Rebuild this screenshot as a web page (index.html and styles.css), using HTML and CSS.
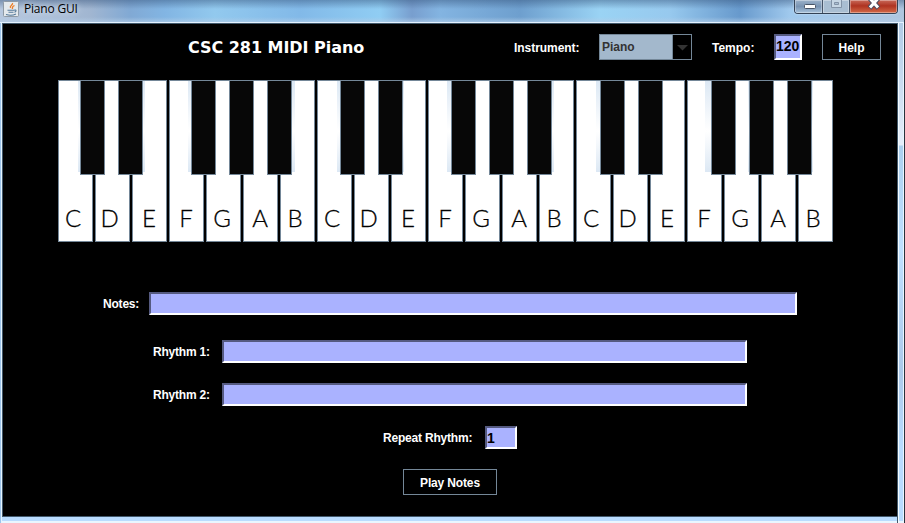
FILE: index.html
```html
<!DOCTYPE html>
<html lang="en">
<head>
<meta charset="utf-8">
<title>Piano GUI</title>
<link rel="stylesheet" href="styles.css">
</head>
<body>
<div class="window">
  <header class="titlebar">
    <svg class="java" viewBox="0 0 16 16" width="16" height="16"><rect x=".5" y=".5" width="15" height="15" rx="1" fill="#e4e9ed" stroke="#8f9aa5"/><path d="M9.500 2c1 2-3.500 2.500-2 5M11.500 4.500C9 5.500 9 6.500 9.500 8" fill="none" stroke="#ee7d25" stroke-width="1.300"/><path d="M4.500 9.300h7M5.500 11.200h5M3 13.500c3 1 7 1 10-.5M11.500 9c2-.4 2 1.500 0 2.200" fill="none" stroke="#54799a" stroke-width="1.100"/></svg>
    <span class="caption">Piano GUI</span>
    <div class="controls">
      <div class="control"><svg width="28" height="13"><rect x="9.500" y="4.500" width="11" height="4" rx="1" fill="#fff" stroke="#485568"/></svg></div>
      <div class="control muted"><svg width="26" height="13"><path fill-rule="evenodd" d="M8.500-1.500h10v9h-10zM11.500 2.500h4v2h-4z" fill="#c6d6e4" stroke="#8293a7"/></svg></div>
      <div class="control close"><svg width="47" height="13"><path d="M19.500-2l9 10M28.500-2l-9 10" fill="none" stroke="#4b4d60" stroke-width="5"/><path d="M20-1.500l8 9M28-1.500l-8 9" fill="none" stroke="#fff" stroke-width="3"/></svg></div>
    </div>
  </header>
  <main class="client">
    <div class="toolbar">
      <h1 class="title">CSC 281 MIDI Piano</h1>
      <span class="label instrument-label">Instrument:</span>
      <div class="combo"><span class="combo-value">Piano</span><span class="combo-arrow"><svg width="11" height="6"><path d="M0 0h11L5.500 5.500z" fill="#333"/></svg></span></div>
      <span class="label tempo-label">Tempo:</span>
      <div class="field tempo">120</div>
      <div class="button help">Help</div>
    </div>
    <div class="piano">
      <div class="whites">
        <div class="key c">C</div><div class="key d">D</div><div class="key">E</div><div class="key">F</div><div class="key g">G</div><div class="key">A</div><div class="key b">B</div>
        <div class="key c">C</div><div class="key d">D</div><div class="key">E</div><div class="key">F</div><div class="key g">G</div><div class="key">A</div><div class="key b">B</div>
        <div class="key c">C</div><div class="key d">D</div><div class="key">E</div><div class="key">F</div><div class="key g">G</div><div class="key">A</div><div class="key b">B</div>
      </div>
      <div class="blacks">
        <div class="group"><i class="black left2"></i><i class="black right2"></i></div>
        <div class="group"><i class="black left3"></i><i class="black"></i><i class="black right3"></i></div>
        <div class="group"><i class="black left3"></i><i class="black right1"></i></div>
        <div class="group"><i class="black left4"></i><i class="black"></i><i class="black right2"></i></div>
        <div class="group"><i class="black left4"></i><i class="black"></i></div>
        <div class="group"><i class="black left6"></i><i class="black left1"></i><i class="black right1"></i></div>
      </div>
    </div>
    <div class="row notes"><span class="label">Notes:</span><div class="field"></div></div>
    <div class="row rhythm first"><span class="label">Rhythm 1:</span><div class="field"></div></div>
    <div class="row rhythm"><span class="label">Rhythm 2:</span><div class="field"></div></div>
    <div class="row repeat"><span class="label">Repeat Rhythm:</span><div class="field">1</div></div>
    <div class="button play">Play Notes</div>
  </main>
</div>
</body>
</html>
```

FILE: styles.css
```css
* { box-sizing: border-box; }
body { margin: 0; overflow: hidden; }
.window {
  width: 905px; height: 523px; padding: 0 7px 0 2px; position: relative;
  background: linear-gradient(90deg, #9dc4ea 1px, #e4f4ff 1px 2px, transparent 2px 897px, #41586b 897px 898px, #f4fbff 898px 899px, transparent 899px 903px, #e8f6ff 903px 904px, #28323c 904px),
    linear-gradient(#a9c5e3 0, #bfd5ec 60px, #e6eefa 145px, #acd0ef 146px, #bfe0ff 250px, #acc9ea 370px, #b9dcff 450px, #b9dcff 521px, #e9f6ff 521px);
  font: bold 12px "Liberation Sans", Arial, sans-serif; color: #fff;
}
.titlebar {
  height: 23px; margin: 0 -6px 0 -2px; padding-left: 3px; display: flex; position: relative;
  border-bottom: 1px solid #e4f2ff;
  background: linear-gradient(rgba(50,80,120,.45), transparent 9px, transparent 17px, rgba(180,205,230,.65)),
    linear-gradient(90deg, #b7c8df 0, #a1b6d1 90px, #81a9d4 130px, #82b5e3 165px, #92c9ee 215px, #82b9e8 300px, #90cdf3 380px, #789ece 412px, #83b4e1 440px, #6e9fce 520px, #9ad3f4 600px, #97c9ee 670px, #6799cc 740px, #a0c9ed 790px, #afc6df 905px);
}
.java { margin-top: 1px; flex: none; }
.caption { font: 12px/17px "Open Sans", "Noto Sans", sans-serif; letter-spacing: -.2px; color: #000; margin-left: 5px; text-shadow: 0 0 7px #eef5ff; }
.controls { display: flex; height: 14px; margin: 0 6px 0 auto; border: 1px solid #334255; border-top: 0; border-radius: 0 0 4px 4px; overflow: hidden; box-shadow: 0 0 2px #d9ecff; }
.control { width: 28px; background: linear-gradient(#9db3cb, #7893b2 50%, #a8c3dc); border-right: 1px solid #455468; box-shadow: inset 0 0 0 1px rgba(255,255,255,.35); overflow: hidden; }
.control svg { display: block; }
.muted { width: 27px; background: #a9bed2; }
.close { width: 47px; border-right: 0; background: linear-gradient(#c86a5a, #af3321 45%, #d36b49); }
.client { height: 494px; width: 896px; background: #000; border: 1px solid #41586b; }
.toolbar { display: flex; height: 56px; padding: 10px 0 0 185px; align-items: flex-start; }
.title { margin: 4px 0 0; width: 326px; font: bold 16px/20px "DejaVu Sans", Verdana, sans-serif; letter-spacing: -.04px; white-space: nowrap; flex: none; }
.label { white-space: nowrap; line-height: 14px; }
.toolbar .label { margin-top: 7px; }
.instrument-label { width: 85px; letter-spacing: -.05px; }
.combo { width: 93px; height: 26px; display: flex; border: 1px solid #748798; }
.combo-value { width: 73px; background: #a3b8cc; color: #333; line-height: 24px; padding-left: 2px; border-right: 1px solid #748798; }
.combo-arrow { flex: 1; display: grid; place-items: center; padding-top: 2px; }
.tempo-label { width: 62px; margin-left: 20px; }
.field { background: #aab2ff; border: 2px solid; border-color: #555a80 #fff #fff #555a80; height: 23px; color: #000; font-size: 14px; line-height: 20px; }
.tempo { width: 28px; height: 26px; line-height: 21px; white-space: nowrap; }
.button { border: 1px solid #748798; height: 26px; line-height: 26px; text-align: center; }
.help { width: 59px; margin-left: 20px; }
.piano { position: relative; margin-left: 55px; width: 775px; height: 162px; }
.whites { display: flex; gap: 2px; }
.key { width: 35px; height: 162px; border: 1px solid #748798; background: #fff; color: #000; font: 300 24px/30px Lato, sans-serif; -webkit-text-stroke: .3px #000; text-align: center; padding: 122px 1px 0 0; }
.c, .b { padding-right: 5px; }
.d { padding-right: 6px; }
.g { padding-right: 3px; }
.blacks { position: absolute; left: 22px; top: 0; display: flex; gap: 48px; }
.group { display: flex; gap: 13px; }
.black { width: 25px; height: 95px; background: #070707; border: 1px solid #748798; position: relative; }
.black::before { content: ""; position: absolute; top: 0; height: 91px; background: linear-gradient(#dce8f4, #fff 55%, #dce8f4); }
.left1::before { width: 1px; right: 24px; }
.left2::before { width: 2px; right: 24px; }
.left3::before { width: 3px; right: 24px; }
.left4::before { width: 4px; right: 24px; }
.left6::before { width: 6px; right: 24px; }
.right1::before { width: 1px; left: 24px; }
.right2::before { width: 2px; left: 24px; }
.right3::before { width: 3px; left: 24px; }
.row { display: flex; }
.row .label { padding-top: 5px; letter-spacing: -.2px; }
.notes { margin: 50px 0 0 100px; }
.notes .label { width: 46px; }
.notes .field { width: 648px; }
.rhythm { margin: 20px 0 0 150px; }
.first { margin-top: 25px; }
.rhythm .label { width: 69px; }
.rhythm .field { width: 525px; }
.repeat { margin: 20px 0 0 380px; }
.repeat .label { width: 102px; }
.repeat .field { width: 32px; }
.play { width: 94px; margin: 20px 0 0 400px; letter-spacing: -.15px; }
```
